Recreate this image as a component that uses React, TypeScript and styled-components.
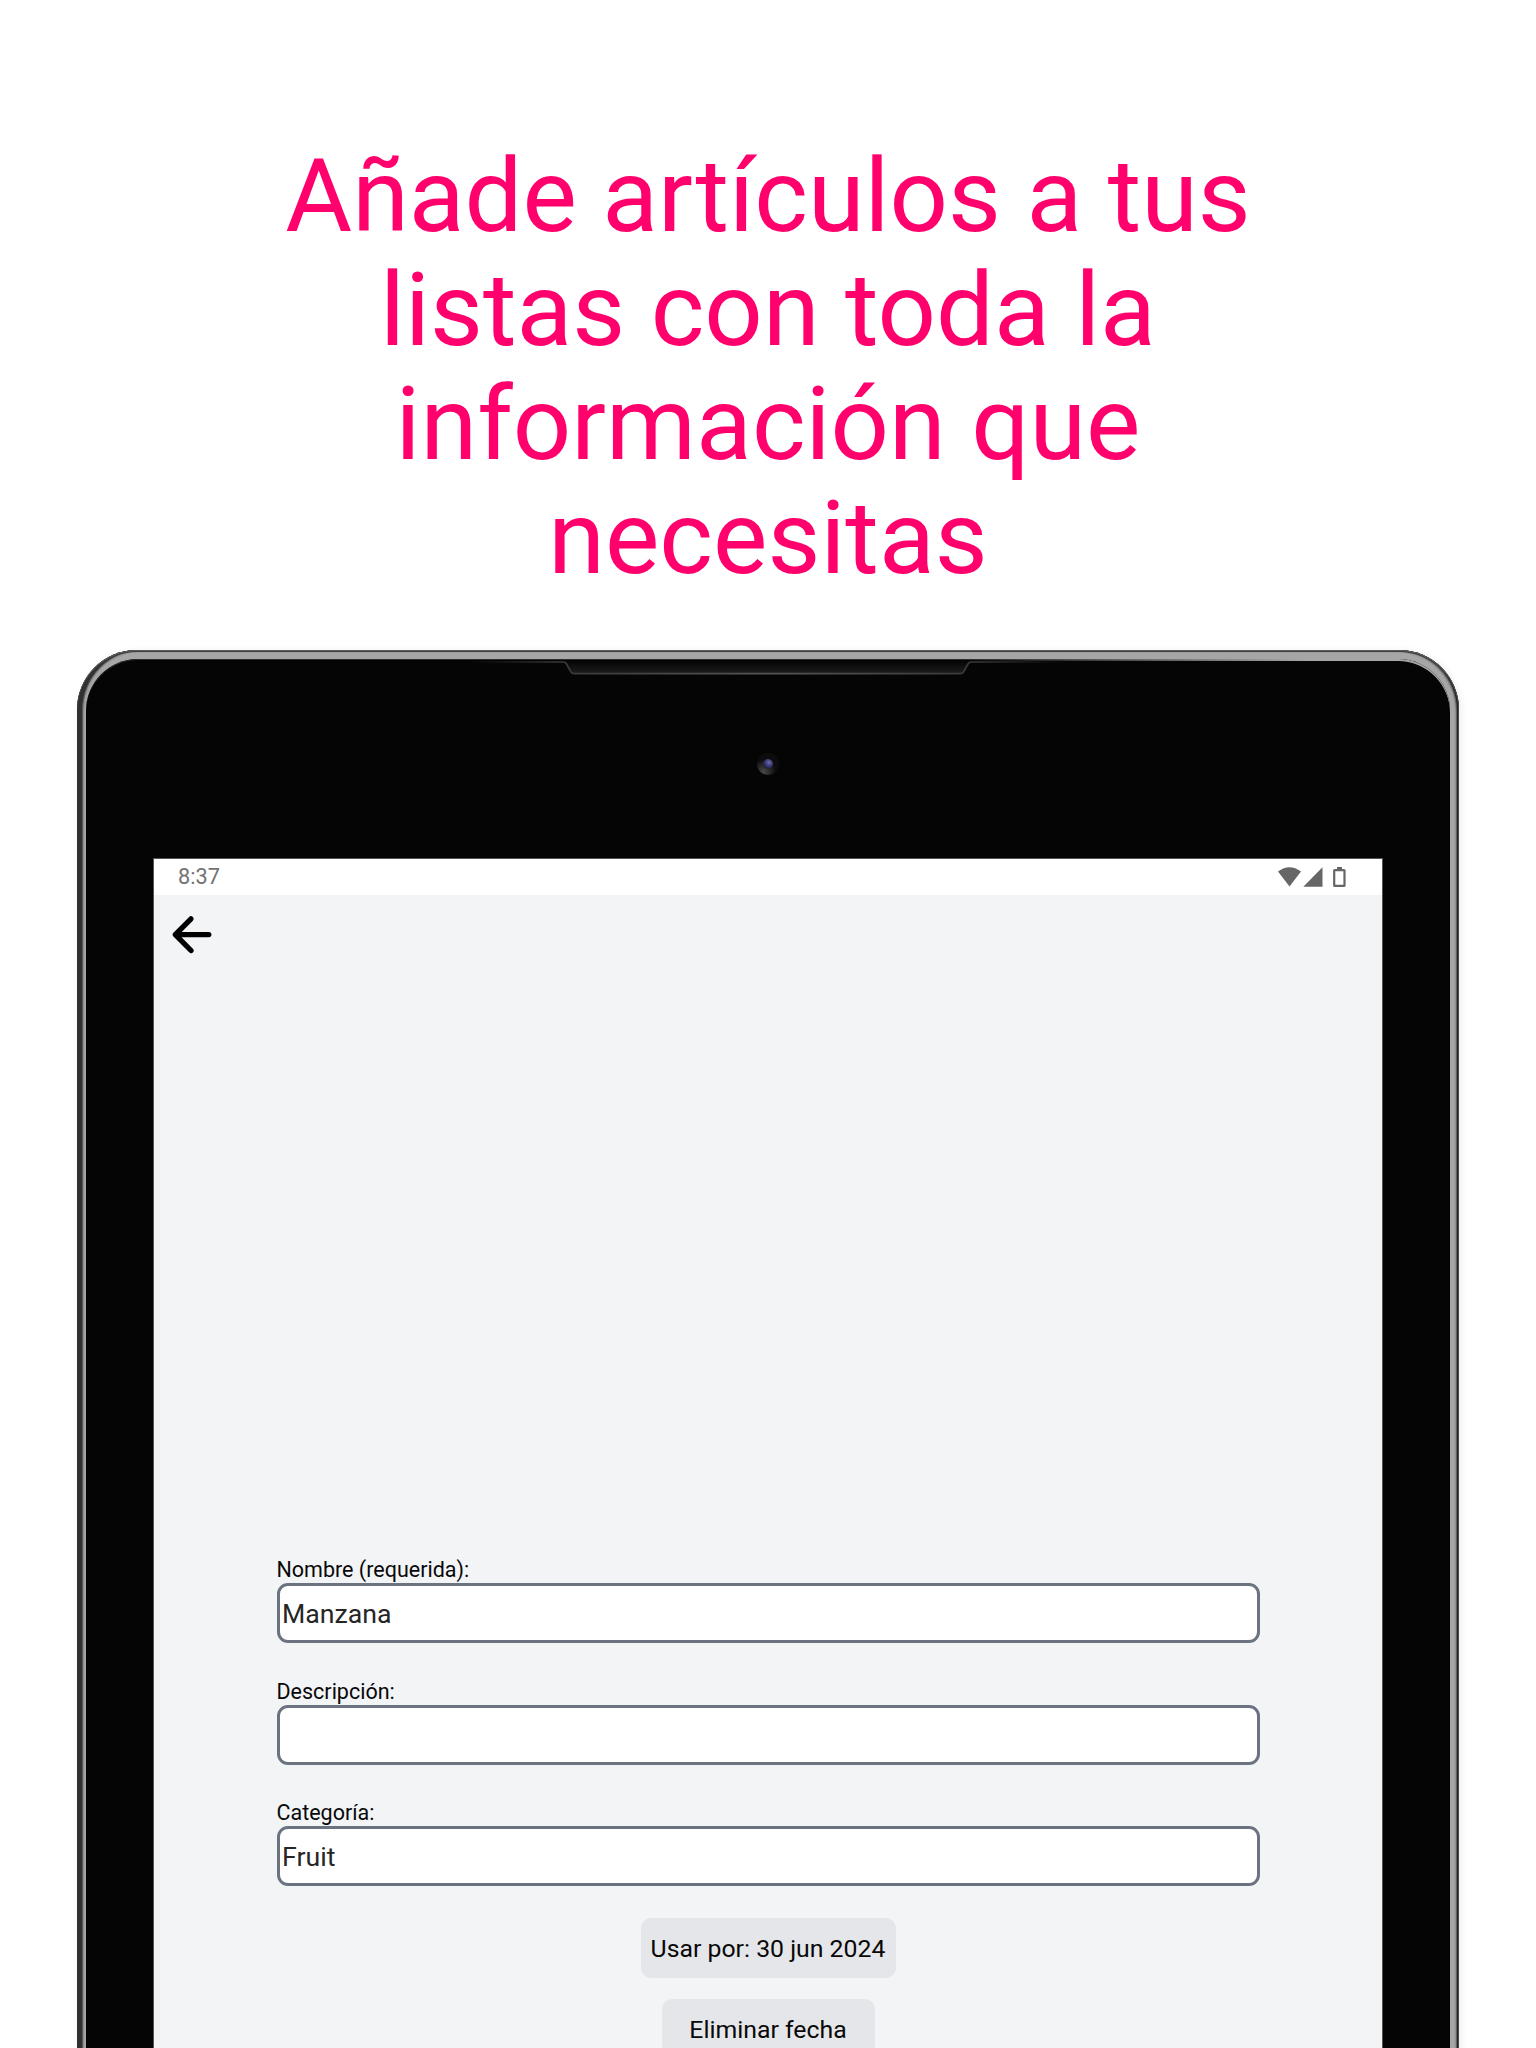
import React from "react";
import styled, { createGlobalStyle } from "styled-components";

const GlobalStyle = createGlobalStyle`
  * { box-sizing: border-box; }
  body { margin: 0; background: #fff; font-family: Roboto, "Noto Sans", sans-serif; }
`;

const Page = styled.main`
  width: 1536px;
  height: 2048px;
  overflow: hidden;
  display: flex;
  flex-direction: column;
  align-items: center;
  background: #fff;
`;

const Headline = styled.h1`
  flex: none;
  width: 1060px;
  height: 650px;
  margin: 0;
  padding-top: 138.6px;
  font-size: 102.6px;
  font-weight: 400;
  line-height: 114.2px;
  text-align: center;
  color: #ff006c;
`;

const Tablet = styled.section`
  flex: none;
  width: 1382px;
  height: 1500px;
  padding: 9px 9px 0;
  border-radius: 60px 60px 0 0;
  background: #a6a6a6;
  box-shadow:
    inset 0 1px 0 #5c605e,
    inset 0 2px 0 #3c3e3d,
    inset 5px 0 1px #303030,
    inset 6px 0 2px #484848,
    inset -1px 0 0 #4c4c4c,
    inset -2px 0 1px #1c1c1c,
    inset -3px 1px 2px #555,
    2px 1px 7px rgba(0, 0, 0, 0.08);
`;

const Bezel = styled.div`
  position: relative;
  height: 100%;
  padding: 199px 67px 0;
  border-radius: 52px 52px 0 0;
  background: #050505;
  box-shadow: inset 0 1px 0 #2c2d2c;
`;

const Hardware = styled.svg`
  position: absolute;
  top: 0;
  left: 0;
`;

const Screen = styled.div`
  height: 100%;
  display: flex;
  flex-direction: column;
  border: solid #555;
  border-width: 1px 1px 0;
  background: #f3f4f6;
`;

const StatusBar = styled.header`
  height: 36px;
  flex: none;
  display: flex;
  align-items: center;
  justify-content: space-between;
  padding: 0 35px 0 24px;
  background: #fff;
  color: #727272;
  font-size: 21.7px;
  line-height: 36px;
`;

const Toolbar = styled.nav`
  height: 80px;
  flex: none;
  padding: 18px 0 0 16px;
`;

const BackButton = styled.button`
  display: block;
  padding: 0;
  border: 0;
  background: none;
  line-height: 0;
`;

const Form = styled.form`
  display: flex;
  flex-direction: column;
  align-items: center;
  padding: 583px 122.5px 0;
`;

const Field = styled.label`
  display: block;
  width: 100%;
  height: 121.5px;
  color: #080808;
  font-size: 21.5px;
  line-height: 24px;

  &:last-of-type {
    height: 116.5px;
  }
`;

const Input = styled.input`
  display: block;
  width: 100%;
  height: 60px;
  margin-top: 1px;
  padding: 2px 2.5px 0;
  border: 3px solid #6b7280;
  border-radius: 11px;
  background: #fff;
  color: #262626;
  font: 400 26.7px Roboto, sans-serif;
  outline: 0;
`;

const Action = styled.button<{ $width: number }>`
  width: ${(p) => p.$width}px;
  height: 60px;
  margin-bottom: 21px;
  padding: 2px 0 0;
  border: 0;
  border-radius: 10px;
  background: #e5e6ea;
  color: #080808;
  font: 400 24.8px Roboto, sans-serif;
  white-space: nowrap;
`;

const FIELDS = [
  { label: "Nombre (requerida):", value: "Manzana" },
  { label: "Descripción:", value: "" },
  { label: "Categoría:", value: "Fruit" },
];

function SpeakerAndCamera() {
  return (
    <Hardware width="1364" height="130" viewBox="86 659 1364 130">
      <defs>
        <linearGradient id="edge" gradientUnits="userSpaceOnUse" x1="470" y1="0" x2="1066" y2="0">
          <stop offset="0" stopColor="#333" stopOpacity="0" />
          <stop offset="0.15" stopColor="#383838" />
          <stop offset="0.5" stopColor="#555" />
          <stop offset="0.85" stopColor="#383838" />
          <stop offset="1" stopColor="#333" stopOpacity="0" />
        </linearGradient>
        <linearGradient id="slot" x1="0" y1="0" x2="0" y2="1">
          <stop offset="0" stopColor="#070707" />
          <stop offset="1" stopColor="#1d1d1d" />
        </linearGradient>
        <radialGradient id="ring" cx="0.3" cy="0.85" r="0.55">
          <stop offset="0" stopColor="#484848" />
          <stop offset="1" stopColor="#0c0c0c" />
        </radialGradient>
        <radialGradient id="lens" cx="0.6" cy="0.35" r="0.65">
          <stop offset="0" stopColor="#6d6da8" />
          <stop offset="0.5" stopColor="#3d3d78" />
          <stop offset="1" stopColor="#1c1c3c" />
        </radialGradient>
        <linearGradient id="rim" x1="0" y1="0" x2="1" y2="0">
          <stop offset="0" stopColor="#a6a6a6" stopOpacity="0" />
          <stop offset="0.7" stopColor="#a6a6a6" />
        </linearGradient>
      </defs>
      <path d="M970 659H1398A52 52 0 0 1 1450 711V713A52 52 0 0 0 1398 661H970Z" fill="url(#rim)" />
      <path d="M565 662L572.5 673.5H962L969 662Z" fill="url(#slot)" />
      <path
        d="M470 662H563Q565.500 662 566.500 664L571 672Q572 673.600 574 673.600H960.500Q962.500 673.600 963.500 672L968 664Q969 662 971.500 662H1066"
        fill="none"
        stroke="url(#edge)"
        strokeWidth="1.700"
      />
      <circle cx="768" cy="764" r="11" fill="url(#ring)" />
      <circle cx="768" cy="764" r="5" fill="url(#lens)" />
    </Hardware>
  );
}

function StatusIcons() {
  return (
    <svg width="70" height="22" viewBox="1277 866 70 22" fill="#666">
      <path d="M1278 871.500Q1289.500 862.800 1301 871.500L1289.500 886.500Z" />
      <path d="M1303.300 886.700H1322.500V867.300Z" />
      <path
        fillRule="evenodd"
        d="M1337 867H1342V869H1344Q1345.600 869 1345.600 870.600V885.400Q1345.600 887 1344 887H1334.700Q1333.100 887 1333.100 885.400V870.600Q1333.100 869 1334.700 869H1337ZM1335.300 871.200V884.800H1343.400V871.200Z"
      />
    </svg>
  );
}

export default function App() {
  return (
    <Page>
      <GlobalStyle />
      <Headline>
        Añade artículos a tus
        <br />
        listas con toda la
        <br />
        información que
        <br />
        necesitas
      </Headline>
      <Tablet>
        <Bezel>
          <SpeakerAndCamera />
          <Screen>
            <StatusBar>
              <span>8:37</span>
              <StatusIcons />
            </StatusBar>
            <Toolbar>
              <BackButton aria-label="Atrás">
                <svg width="46" height="42" viewBox="170 913 46 42" fill="none" stroke="#000" strokeWidth="5.300" strokeLinecap="round" strokeLinejoin="round">
                  <path d="M208.800 934.600H175.300M191 918.800L175.300 934.600L191 950.500" />
                </svg>
              </BackButton>
            </Toolbar>
            <Form>
              {FIELDS.map((f) => (
                <Field key={f.label}>
                  {f.label}
                  <Input defaultValue={f.value} />
                </Field>
              ))}
              <Action type="button" $width={255}>Usar por: 30 jun 2024</Action>
              <Action type="button" $width={213}>Eliminar fecha</Action>
            </Form>
          </Screen>
        </Bezel>
      </Tablet>
    </Page>
  );
}
